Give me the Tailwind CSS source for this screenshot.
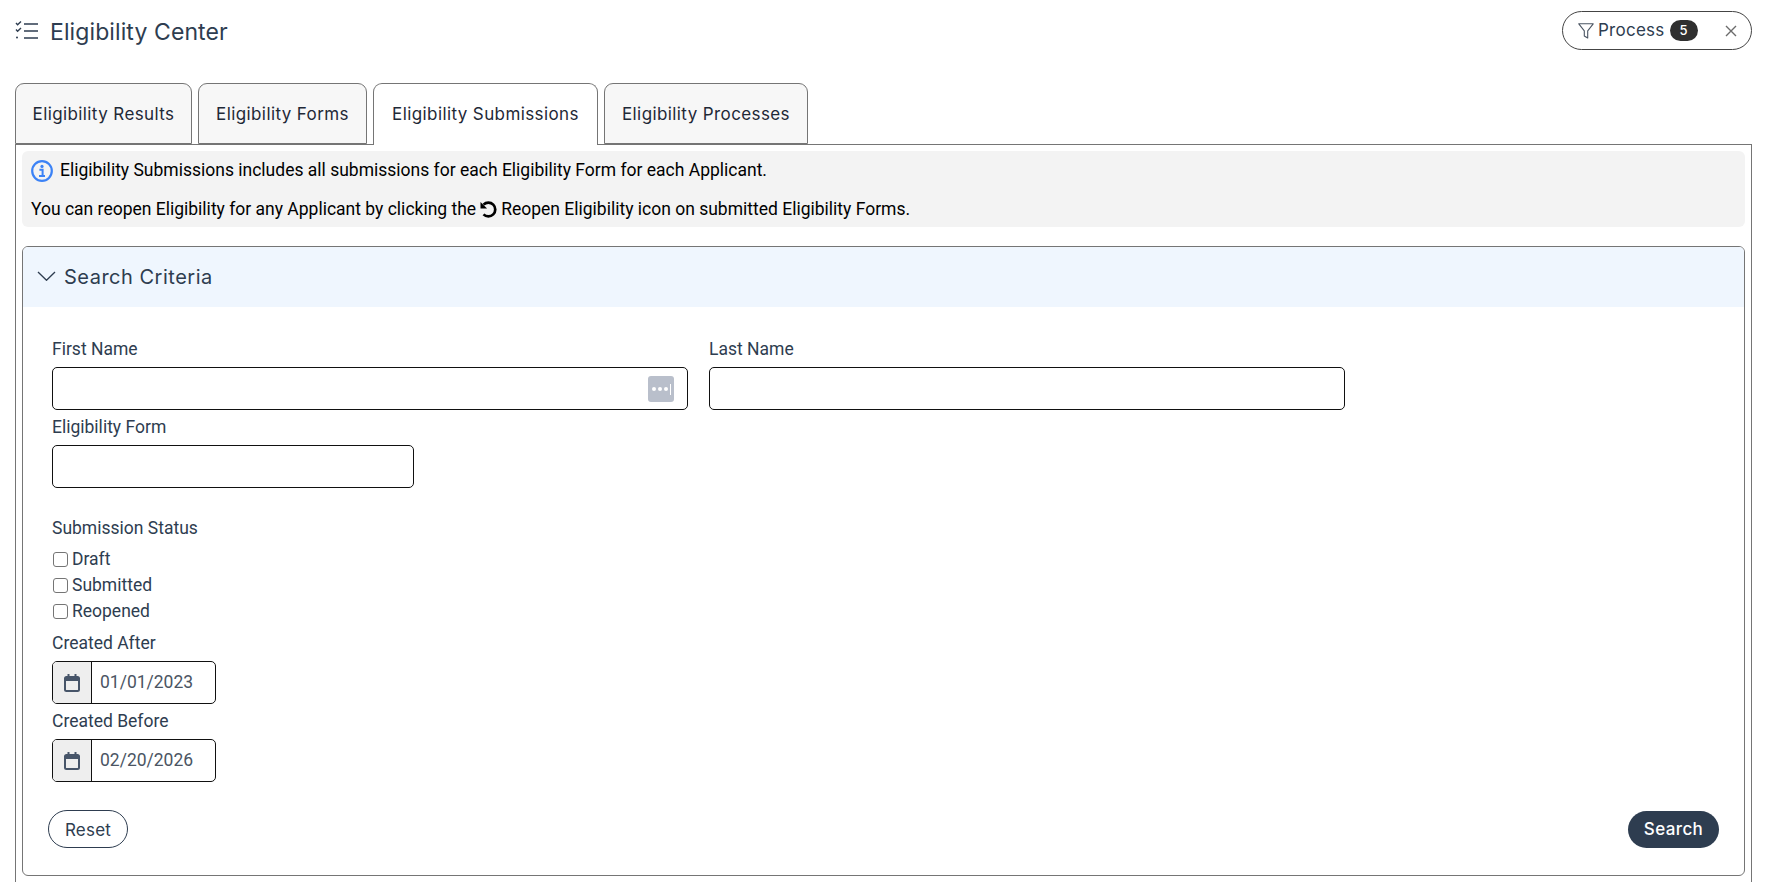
<!DOCTYPE html>
<html>
<head>
  <title>Eligibility Center</title>
  <script src="https://cdn.jsdelivr.net/npm/@tailwindcss/browser@4"></script>
</head>
<body class="h-screen overflow-hidden bg-white text-[#2e3d50] font-['Roboto',sans-serif]">

<!-- page header -->
<div class="flex items-center justify-between pl-[15px] pr-[18px] pt-[11px]">
  <div class="flex items-center gap-[12px]">
    <svg class="w-[23px] h-[20px]" viewBox="0 0 23 20" fill="none" stroke="#2e3d50" stroke-width="1.4">
      <path d="M9 3h14M9 10h14M9 17h14"/>
      <path d="M1 2l1.6 1.8L6 0.5M1 8.5l1.6 1.8L6 7"/>
      <circle cx="2" cy="16.6" r="1" fill="#2e3d50" stroke="none"/>
    </svg>
    <h1 class="font-['Inter',sans-serif] text-[23px] tracking-[0.1px] leading-[36px] pt-[3px]">Eligibility Center</h1>
  </div>
  <div class="flex items-center w-[190px] h-[39px] rounded-full border border-[#444] pl-[15px] pr-[14px] font-['Inter',sans-serif]">
    <svg class="w-[16px] h-[16px]" viewBox="0 0 16 16" fill="none" stroke="#4b5563" stroke-width="1.1">
      <path d="M0.8 0.8h14.4L9.7 7.8v7.2l-3.4-2V7.8z" stroke-linejoin="round"/>
    </svg>
    <span class="ml-[4px] text-[17px] tracking-[0.25px]">Process</span>
    <span class="ml-[5px] w-[28px] h-[21px] rounded-full bg-[#2f2f2f] text-white text-[13px] font-medium flex items-center justify-center">5</span>
    <svg class="ml-auto w-[12px] h-[12px]" viewBox="0 0 12 12" stroke="#6b6b6b" stroke-width="1.4"><path d="M1 1l10 10M11 1L1 11"/></svg>
  </div>
</div>

<!-- tabs -->
<div class="relative z-10 flex gap-[6px] pl-[15px] mt-[33px] h-[61px] font-['Inter',sans-serif] text-[17px] tracking-[0.4px] text-[#1f2937]">
  <button class="w-[177px] h-[61px] pt-[2px] bg-[#f7f7f7] border border-[#757575] rounded-t-[9px]">Eligibility Results</button>
  <button class="w-[169px] h-[61px] pt-[2px] bg-[#f7f7f7] border border-[#757575] rounded-t-[9px]">Eligibility Forms</button>
  <button class="w-[225px] h-[62px] pt-[2px] pb-px bg-white border border-b-0 border-[#757575] rounded-t-[9px]">Eligibility Submissions</button>
  <button class="w-[204px] h-[61px] pt-[2px] bg-[#f7f7f7] border border-[#757575] rounded-t-[9px]">Eligibility Processes</button>
</div>

<!-- tab panel -->
<div class="ml-[15px] mr-[18px] border border-[#757575] px-[6px] pt-[6px] pb-[40px]">
  <div class="h-[76px] bg-[#f3f3f3] rounded-[6px] text-black text-[17.5px] pl-[9px]">
    <div class="flex items-center h-[38px] pt-[1px]">
      <svg class="w-[22px] h-[22px]" viewBox="0 0 22 22" fill="none">
        <circle cx="11" cy="11" r="9.8" stroke="#3b82f6" stroke-width="2.2"/>
        <circle cx="11" cy="6.4" r="1.6" fill="#3b82f6"/>
        <path d="M8.4 9.8h3.2v6M8 15.9h6" stroke="#3b82f6" stroke-width="2"/>
      </svg>
      <span class="ml-[7px]">Eligibility Submissions includes all submissions for each Eligibility Form for each Applicant.</span>
    </div>
    <div class="flex items-center h-[38px] pt-[3px]">
      <span>You can reopen Eligibility for any Applicant by clicking the</span>
      <svg class="mx-[4px] w-[17px] h-[17px]" viewBox="0 0 17 17" fill="none">
        <path d="M3.5 3.6A6.9 6.9 0 1 1 3.5 13.4" stroke="#000" stroke-width="2.7"/>
        <path d="M0.5 1v6.6h6.6z" fill="#000"/>
      </svg>
      <span>Reopen Eligibility icon on submitted Eligibility Forms.</span>
    </div>
  </div>

  <!-- search card -->
  <div class="mt-[19px] h-[630px] border border-[#757575] rounded-[6px] overflow-hidden">
    <div class="flex items-center h-[60px] bg-[#eff6fe] pl-[14px]">
      <svg class="w-[19px] h-[10px] -mt-[2px]" viewBox="0 0 19 10" fill="none" stroke="#2e3d50" stroke-width="1.3"><path d="M1 1l8.5 8.3L18 1"/></svg>
      <span class="ml-[8px] font-['Inter',sans-serif] text-[20px] tracking-[0.5px]">Search Criteria</span>
    </div>

    <div class="pl-[29px] pr-[25px] pt-[29px] text-[17.5px]">
      <div class="flex gap-[21px]">
        <div class="w-[636px]">
          <label class="block h-[24px] leading-[24px] mb-[7px] pt-px">First Name</label>
          <div class="relative">
            <input type="text" class="block w-full h-[43px] border border-[#111] rounded-[5px]">
            <span class="absolute right-[14px] top-[9px] flex items-center justify-center gap-[2px] w-[26px] h-[26px] rounded-[3px] bg-[#b9bfcb]">
              <i class="w-[4px] h-[4px] rounded-full bg-white"></i>
              <i class="w-[4px] h-[4px] rounded-full bg-white"></i>
              <i class="w-[4px] h-[4px] rounded-full bg-white"></i>
              <i class="w-[1px] h-[11px] bg-white"></i>
            </span>
          </div>
        </div>
        <div class="w-[636px]">
          <label class="block h-[24px] leading-[24px] mb-[7px] pt-px">Last Name</label>
          <input type="text" class="block w-full h-[43px] border border-[#111] rounded-[5px]">
        </div>
      </div>

      <label class="block h-[24px] leading-[24px] mt-[5px] mb-[6px]">Eligibility Form</label>
      <input type="text" class="block w-[362px] h-[43px] border border-[#111] rounded-[5px]">

      <label class="block h-[24px] leading-[24px] mt-[28px] mb-[6px]">Submission Status</label>
      <div class="flex items-center h-[26px] gap-[4px]"><input type="checkbox" class="appearance-none ml-px w-[15px] h-[15px] border border-[#757575] rounded-[3px]"><span class="pt-px">Draft</span></div>
      <div class="flex items-center h-[26px] gap-[4px]"><input type="checkbox" class="appearance-none ml-px w-[15px] h-[15px] border border-[#757575] rounded-[3px]"><span class="pt-px">Submitted</span></div>
      <div class="flex items-center h-[26px] gap-[4px]"><input type="checkbox" class="appearance-none ml-px w-[15px] h-[15px] border border-[#757575] rounded-[3px]"><span class="pt-px">Reopened</span></div>

      <label class="block h-[24px] leading-[24px] mt-[7px] mb-[6px]">Created After</label>
      <div class="flex w-[164px] h-[43px] border border-[#111] rounded-[5px] overflow-hidden">
        <span class="flex items-center justify-center w-[39px] bg-[#eeeeee] border-r border-[#111]">
          <svg class="w-[16px] h-[18px]" viewBox="0 0 16 18" fill="#475569" stroke="#475569" stroke-width="2"><rect x="1" y="3" width="14" height="14" rx="1.5" fill="none"/><path d="M1 4h14v3H1z" stroke="none"/><path d="M4.5 0v3M11.5 0v3"/></svg>
        </span>
        <input type="text" value="01/01/2023" class="w-[120px] pl-[8px] text-[#4b5563]">
      </div>

      <label class="block h-[24px] leading-[24px] mt-[5px] mb-[6px]">Created Before</label>
      <div class="flex w-[164px] h-[43px] border border-[#111] rounded-[5px] overflow-hidden">
        <span class="flex items-center justify-center w-[39px] bg-[#eeeeee] border-r border-[#111]">
          <svg class="w-[16px] h-[18px]" viewBox="0 0 16 18" fill="#475569" stroke="#475569" stroke-width="2"><rect x="1" y="3" width="14" height="14" rx="1.5" fill="none"/><path d="M1 4h14v3H1z" stroke="none"/><path d="M4.5 0v3M11.5 0v3"/></svg>
        </span>
        <input type="text" value="02/20/2026" class="w-[120px] pl-[8px] text-[#4b5563]">
      </div>

      <div class="flex justify-between items-center mt-[28px] font-['Inter',sans-serif] text-[17px]">
        <button class="-ml-[4px] w-[80px] h-[38px] pt-[3px] rounded-full border border-[#2e3d50] tracking-[0.2px]">Reset</button>
        <button class="w-[91px] h-[37px] pt-[2px] rounded-full bg-[#2e3d50] text-white font-medium tracking-[0.4px]">Search</button>
      </div>
    </div>
  </div>
</div>

</body>
</html>
